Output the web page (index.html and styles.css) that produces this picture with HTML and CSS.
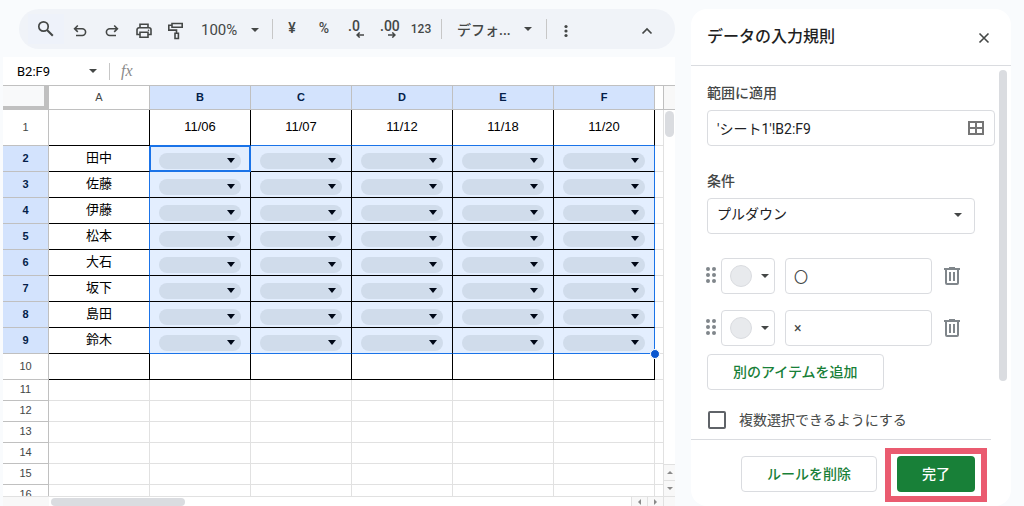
FILE: index.html
```html
<!DOCTYPE html>
<html lang="ja">
<head>
<meta charset="utf-8">
<title>データの入力規則</title>
<link rel="stylesheet" href="styles.css">
</head>
<body>
<main class="workspace">
  <div class="toolbar" role="toolbar" aria-label="ツールバー">
    <button class="tool tool-search" aria-label="検索"><svg width="18" height="18" viewBox="0 0 18 18"><circle cx="6.500" cy="6.500" r="4.700" fill="none" stroke="currentColor" stroke-width="1.700"/><path d="M10 10l5.800 5.800" stroke="currentColor" stroke-width="2"/></svg></button>
    <button class="tool" aria-label="元に戻す"><svg width="18" height="18" viewBox="0 0 18 18"><path d="M6.800 3.500L3.600 6.700l3.200 3.200M4 6.700h7.200a3.400 3.400 0 0 1 0 6.800H5" fill="none" stroke="currentColor" stroke-width="1.600"/></svg></button>
    <button class="tool" aria-label="やり直し"><svg width="18" height="18" viewBox="0 0 18 18"><path d="M11.200 3.500l3.200 3.200-3.200 3.200M14 6.700H6.800a3.400 3.400 0 0 0 0 6.800H13" fill="none" stroke="currentColor" stroke-width="1.600"/></svg></button>
    <button class="tool" aria-label="印刷"><svg width="18" height="18" viewBox="0 0 18 18"><path d="M5 5.500V2.300h8v3.200M4.800 12.500H2V7.800a2 2 0 0 1 2-2h10a2 2 0 0 1 2 2v4.700h-2.800M5 10.200h8v5H5z" fill="none" stroke="currentColor" stroke-width="1.600"/><circle cx="13.500" cy="8.200" r=".8" fill="currentColor"/></svg></button>
    <button class="tool" aria-label="書式を貼り付け"><svg width="18" height="18" viewBox="0 0 18 18"><path d="M5 1.500h10.200v3.700H5zM5 3.200H1.800v4.900H9.500v3M8 11.300h3.400v5.200H8z" fill="none" stroke="currentColor" stroke-width="1.600"/></svg></button>
    <button class="tool-menu tool-zoom">100%<span class="caret"></span></button>
    <span class="divider"></span>
    <button class="tool tool-text">¥</button>
    <button class="tool tool-text">%</button>
    <button class="tool tool-decimal" aria-label="小数点以下の桁数を減らす"><span class="decimal">.0</span><svg class="decimal-arrow" width="8" height="6" viewBox="0 0 8 6"><path d="M8 3H1M3.700.4L1 3l2.700 2.600" fill="none" stroke="currentColor" stroke-width="1.500"/></svg></button>
    <button class="tool tool-decimal" aria-label="小数点以下の桁数を増やす"><span class="decimal">.00</span><svg class="decimal-arrow" width="8" height="6" viewBox="0 0 8 6"><path d="M0 3h7M4.300.4L7 3 4.300 5.600" fill="none" stroke="currentColor" stroke-width="1.500"/></svg></button>
    <button class="tool tool-number">123</button>
    <span class="divider"></span>
    <button class="tool-menu tool-font">デフォ...<span class="caret"></span></button>
    <span class="divider"></span>
    <button class="tool" aria-label="その他"><svg width="4" height="14" viewBox="0 0 4 14" fill="currentColor"><circle cx="2" cy="2.500" r="1.600"/><circle cx="2" cy="7" r="1.600"/><circle cx="2" cy="11.500" r="1.600"/></svg></button>
    <button class="tool tool-collapse" aria-label="メニューを非表示"><svg width="12" height="8" viewBox="0 0 12 8"><path d="M1.500 6.500L6 2l4.500 4.500" fill="none" stroke="currentColor" stroke-width="1.700"/></svg></button>
  </div>

  <section class="sheet">
    <div class="formula-bar">
      <button class="name-box">B2:F9<span class="caret"></span></button>
      <span class="formula-divider"></span>
      <span class="fx">fx</span>
    </div>
    <div class="grid-area">
      <div class="grid-view">
        <table class="grid">
          <colgroup><col class="col-head"><col class="col"><col class="col"><col class="col"><col class="col"><col class="col"><col class="col"><col></colgroup>
          <thead>
            <tr><th class="corner"></th><th>A</th><th class="on">B</th><th class="on">C</th><th class="on">D</th><th class="on">E</th><th class="on">F</th><th></th></tr>
          </thead>
          <tbody id="rows"></tbody>
        </table>
        <span class="fill-handle"></span>
      </div>
      <div class="vbar">
        <span class="vbar-head"></span>
        <span class="vbar-thumb"></span>
        <button class="bar-button" aria-label="上"><span class="tri tri-up"></span></button>
        <button class="bar-button" aria-label="下"><span class="tri tri-down"></span></button>
      </div>
    </div>
    <div class="hbar">
      <span class="hbar-head"></span>
      <span class="hbar-thumb"></span>
      <button class="hbar-button" aria-label="左"><span class="tri tri-left"></span></button>
      <button class="hbar-button" aria-label="右"><span class="tri tri-right"></span></button>
      <span class="hbar-corner"></span>
    </div>
  </section>
</main>

<aside class="panel">
  <header class="panel-head">
    <h1>データの入力規則</h1>
    <button class="close" aria-label="閉じる"><svg width="12" height="12" viewBox="0 0 12 12"><path d="M1.500 1.500l9 9M10.500 1.500l-9 9" stroke="currentColor" stroke-width="1.600"/></svg></button>
  </header>
  <div class="panel-body">
    <div class="form">
      <label class="label" for="range">範囲に適用</label>
      <div class="box range-box">
        <input id="range" type="text" value="'シート1'!B2:F9">
        <button class="range-pick" aria-label="データ範囲を選択"><svg width="16" height="14" viewBox="0 0 16 14"><path d="M1 1h14v12H1zM8 1v12M1 7h14" fill="none" stroke="currentColor" stroke-width="2"/></svg></button>
      </div>
      <label class="label label-next" for="rule">条件</label>
      <div class="box select-box">
        <select id="rule"><option>プルダウン</option></select>
        <span class="caret"></span>
      </div>
      <div class="items">
        <div class="item">
          <svg class="drag" width="10" height="16" viewBox="0 0 10 16" fill="currentColor"><circle cx="2" cy="2" r="2"/><circle cx="8" cy="2" r="2"/><circle cx="2" cy="8" r="2"/><circle cx="8" cy="8" r="2"/><circle cx="2" cy="14" r="2"/><circle cx="8" cy="14" r="2"/></svg>
          <button class="box color" aria-label="色"><span class="swatch"></span><span class="caret"></span></button>
          <input class="box item-value" type="text" aria-label="アイテム 1" value="〇">
          <button class="trash" aria-label="削除"><svg width="16" height="18" viewBox="0 0 16 18"><path d="M0 2h16M5 1h6M2 2v14q0 1 1 1h10q1 0 1-1V2M6 5v9M10 5v9" fill="none" stroke="currentColor" stroke-width="2"/></svg></button>
        </div>
        <div class="item">
          <svg class="drag" width="10" height="16" viewBox="0 0 10 16" fill="currentColor"><circle cx="2" cy="2" r="2"/><circle cx="8" cy="2" r="2"/><circle cx="2" cy="8" r="2"/><circle cx="8" cy="8" r="2"/><circle cx="2" cy="14" r="2"/><circle cx="8" cy="14" r="2"/></svg>
          <button class="box color" aria-label="色"><span class="swatch"></span><span class="caret"></span></button>
          <input class="box item-value" type="text" aria-label="アイテム 2" value="×">
          <button class="trash" aria-label="削除"><svg width="16" height="18" viewBox="0 0 16 18"><path d="M0 2h16M5 1h6M2 2v14q0 1 1 1h10q1 0 1-1V2M6 5v9M10 5v9" fill="none" stroke="currentColor" stroke-width="2"/></svg></button>
        </div>
      </div>
      <button class="box action add">別のアイテムを追加</button>
      <label class="check"><input type="checkbox">複数選択できるようにする</label>
    </div>
    <span class="panel-thumb"></span>
  </div>
  <footer class="panel-foot">
    <button class="box action">ルールを削除</button>
    <div class="done-wrap"><button class="done">完了</button></div>
  </footer>
</aside>
<script src="grid.js"></script>
</body>
</html>
```

FILE: styles.css
```css
* { box-sizing: border-box; }

body {
  margin: 0;
  height: 100vh;
  overflow: hidden;
  display: flex;
  gap: 16px;
  padding: 9px 13px 0 3px;
  background: #f9fbfd;
  color: #444746;
  font-family: Roboto, "Noto Sans CJK JP", sans-serif;
  font-size: 14px;
}

button, input, select { font: inherit; color: inherit; }
button { border: 0; padding: 0; background: none; }
svg { display: block; flex: none; }

.caret {
  flex: none;
  border: 4px solid transparent;
  border-top: 4px solid #444746;
  border-bottom: 0;
}

/* Toolbar */
.workspace { flex: 1; min-width: 0; display: flex; flex-direction: column; gap: 8px; }
.toolbar {
  flex: none;
  height: 40px;
  margin-left: 16px;
  padding: 0 12px 0 9px;
  border-radius: 20px;
  background: #f0f3f8;
  display: flex;
  align-items: center;
}
.tool {
  position: relative;
  width: 32px;
  height: 30px;
  padding-top: 3px;
  flex: none;
  display: flex;
  align-items: center;
  justify-content: center;
}
.tool-search { width: 36px; padding: 0; background: #eef2fa; }
.tool-text { padding: 0 0 2px; font-size: 14px; font-weight: 500; }
.tool-number { width: 34px; padding: 0; font-size: 12px; font-weight: 500; }
.tool-collapse { margin-left: auto; }
.tool-menu { display: flex; align-items: center; justify-content: space-between; }
.tool-zoom { width: 76px; padding: 2px 9px 0; font-size: 15px; }
.tool-font { width: 98px; padding: 0 11px 0 12px; font-weight: 500; }
.divider { flex: none; width: 1px; height: 20px; margin: 0 3px; background: #c7c7c7; }
.tool-decimal { padding: 0; align-items: flex-start; justify-content: flex-start; }
.decimal { margin-left: 8px; font-size: 14px; font-weight: 500; line-height: 24px; }
.decimal-arrow { position: absolute; right: 8px; bottom: 6px; }
.tool-zoom + .divider { margin-left: 4px; }

/* Formula bar */
.sheet { flex: 1; min-height: 0; display: flex; flex-direction: column; background: #fff; }
.formula-bar {
  flex: none;
  height: 29px;
  display: flex;
  align-items: center;
  border-bottom: 1px solid #c0c0c0;
}
.name-box {
  width: 106px;
  padding: 0 12px 0 14px;
  display: flex;
  align-items: center;
  justify-content: space-between;
  color: #000;
  font-size: 13px;
}
.formula-divider { width: 1px; height: 17px; background: #c7c7c7; }
.fx { margin-left: 11px; color: #8a8a8a; font: italic 16px "Liberation Serif", serif; }

/* Grid */
.grid-area { flex: 1; min-height: 0; display: flex; }
.grid-view { position: relative; flex: 1; min-width: 0; overflow: hidden; }
.grid {
  width: 100%;
  table-layout: fixed;
  border-collapse: separate;
  border-spacing: 0;
  font-family: "Liberation Sans", "Noto Sans CJK JP", sans-serif;
}
.col-head { width: 46px; }
.col { width: 101px; }
.grid th, .grid td {
  height: 21px;
  padding: 0 0 2px;
  border: solid #e1e1e1;
  border-width: 0 1px 1px 0;
  text-align: center;
  line-height: 16px;
}
.grid th { font-size: 11px; font-weight: 400; border-color: #c0c0c0; }
.grid thead th { height: 24px; }
.grid .on { background: #d3e3fd; color: #041e49; font-weight: 700; }
.grid .corner { background: #f8f9fa; border-width: 0 5px 4px 0; }
.grid td { color: #000; font-size: 13px; }
.grid .tall > * { height: 36px; }
.grid .mid > * { height: 26px; }
.grid .ruled { border-color: #000; }
.grid .edge-right { border-right-color: #1a73e8; }
.grid .edge-bottom { border-bottom-color: #1a73e8; }
.grid .picked { background: #e3eefe; vertical-align: top; padding: 7px 9px 0; }
.grid .active { box-shadow: inset 0 0 0 1px #1a73e8; }
.chip {
  width: 100%;
  height: 16px;
  padding: 0 6px 1px 0;
  border-radius: 8px;
  background: #d0dceb;
  display: flex;
  align-items: center;
  justify-content: flex-end;
}
.chip .caret { border-top-width: 5px; border-top-color: #000817; }
.fill-handle {
  position: absolute;
  left: 647px;
  top: 263px;
  width: 10px;
  height: 10px;
  border: 1px solid #fff;
  border-radius: 50%;
  background: #0b57d0;
}

/* Scroll bars */
.vbar { width: 12px; flex: none; display: flex; flex-direction: column; border-left: 1px solid #e1e1e1; }
.grid-view { margin-right: -1px; }
.vbar-head { height: 24px; background: #f8f8f8; border-bottom: 1px solid #c0c0c0; }
.vbar-thumb { height: 26px; margin: 1px 1px auto; border-radius: 5px; background: #dadce0; }
.bar-button, .hbar-button { display: flex; align-items: center; justify-content: center; background: #f8f8f8; }
.bar-button { height: 16px; border-top: 1px solid #e1e1e1; }
.hbar { flex: none; height: 10px; display: flex; border-top: 1px solid #e1e1e1; }
.hbar-head { width: 46px; background: #f8f8f8; }
.hbar-thumb { width: 134px; margin: 1px auto 0 2px; border-radius: 4px; background: #dadce0; }
.hbar-button { width: 16px; border-left: 1px solid #e1e1e1; }
.hbar-corner { width: 12px; border-left: 1px solid #e1e1e1; background: #f8f8f8; }
.tri { border: 3px solid transparent; }
.tri-up { border-top: 0; border-bottom-color: #8a8a8a; }
.tri-down { border-bottom: 0; border-top-color: #8a8a8a; }
.tri-left { border-left: 0; border-right-color: #8a8a8a; }
.tri-right { border-right: 0; border-left-color: #8a8a8a; }

/* Side panel */
.panel {
  flex: none;
  width: 320px;
  display: flex;
  flex-direction: column;
  border-radius: 16px;
  background: #fff;
}
.panel-head {
  flex: none;
  height: 57px;
  padding: 0 21px 0 16px;
  display: flex;
  align-items: center;
  justify-content: space-between;
  border-bottom: 1px solid #dadce0;
}
.panel-head h1 { margin: 0; color: #1f1f1f; font-size: 16px; font-weight: 500; line-height: 24px; }
.close { padding-top: 1px; }
.panel-body { flex: 1; min-height: 0; display: flex; padding-right: 4px; overflow: hidden; }
.form { flex: 1; min-width: 0; padding: 17px 4px 0 16px; display: flex; flex-direction: column; align-items: flex-start; }
.panel-thumb { width: 8px; height: 311px; margin-top: 4px; border-radius: 4px; background: #dadce0; }
.label { font-weight: 500; line-height: 20px; margin-bottom: 7px; }
.label-next { margin-top: 25px; }
.box { height: 36px; border: 1px solid #dadce0; border-radius: 4px; background: #fff; }
.range-box { width: 100%; display: flex; align-items: center; padding: 0 10px 0 9px; color: #202124; }
.range-box input { flex: 1; min-width: 0; border: 0; padding: 0; outline: 0; }
.range-pick { color: #757575; }
.select-box { position: relative; width: calc(100% - 20px); }
.select-box select {
  width: 100%;
  height: 100%;
  padding: 0 30px 4px 9px;
  border: 0;
  appearance: none;
  background: none;
  color: #202124;
}
.select-box .caret { position: absolute; right: 12px; top: 14px; }
.items { width: calc(100% - 35px); margin-top: 24px; display: flex; flex-direction: column; gap: 16px; }
.item { display: flex; align-items: center; }
.drag { margin: 0 5px 2px -1px; color: #80868b; }
.color { flex: none; width: 54px; padding: 0 5px 0 8px; display: flex; align-items: center; justify-content: space-between; }
.swatch { width: 22px; height: 22px; border: 1px solid #dadce0; border-radius: 50%; background: #e8eaed; }
.item-value { flex: 1; min-width: 0; margin: 0 12px 0 10px; padding: 0 8px; }
.trash { color: #80868b; }
.action { padding: 0 25px 2px; color: #188038; font-weight: 500; }
.add { margin-top: 8px; }
.check { margin-top: 20px; display: flex; align-items: center; line-height: 20px; }
.check input {
  appearance: none;
  width: 18px;
  height: 18px;
  margin: 0 13px 0 1px;
  border: 2px solid #5f6368;
  border-radius: 2px;
}
.panel-foot {
  flex: none;
  height: 67px;
  margin-right: 20px;
  padding: 16px 16px 0;
  display: flex;
  justify-content: flex-end;
  gap: 20px;
  border-top: 1px solid #dadce0;
}
.done-wrap { position: relative; height: 36px; }
.done-wrap::after {
  content: "";
  position: absolute;
  inset: -8px -12px -10px;
  border: 6px solid #ea5b70;
}
.done { height: 36px; padding: 0 25px 2px; border-radius: 4px; background: #188038; color: #fff; font-weight: 500; }
```

FILE: grid.js
```js
const names = { 2: '田中', 3: '佐藤', 4: '伊藤', 5: '松本', 6: '大石', 7: '坂下', 8: '島田', 9: '鈴木' };
const dates = ['11/06', '11/07', '11/12', '11/18', '11/20'];
const rows = document.getElementById('rows');

for (let r = 1; r <= 16; r++) {
  const tr = rows.insertRow();
  const selected = r >= 2 && r <= 9;
  tr.className = r === 1 ? 'tall' : r <= 10 ? 'mid' : '';

  const head = document.createElement('th');
  head.textContent = r;
  if (selected) head.className = 'on';
  tr.append(head);

  for (let c = 0; c <= 6; c++) {
    const td = tr.insertCell();
    if (c === 6) continue;
    if (r <= 10) td.classList.add('ruled');
    if (c === 0) {
      td.textContent = names[r] || '';
      if (selected) td.classList.add('edge-right');
      continue;
    }
    if (r === 1) td.textContent = dates[c - 1];
    if (r === 1 || r === 9) td.classList.add('edge-bottom');
    if (selected) {
      td.classList.add('picked');
      td.innerHTML = '<button class="chip" aria-label="プルダウン"><span class="caret"></span></button>';
      if (c === 5) td.classList.add('edge-right');
      if (r === 2 && c === 1) td.classList.add('active', 'edge-right', 'edge-bottom');
    }
  }
}
```
